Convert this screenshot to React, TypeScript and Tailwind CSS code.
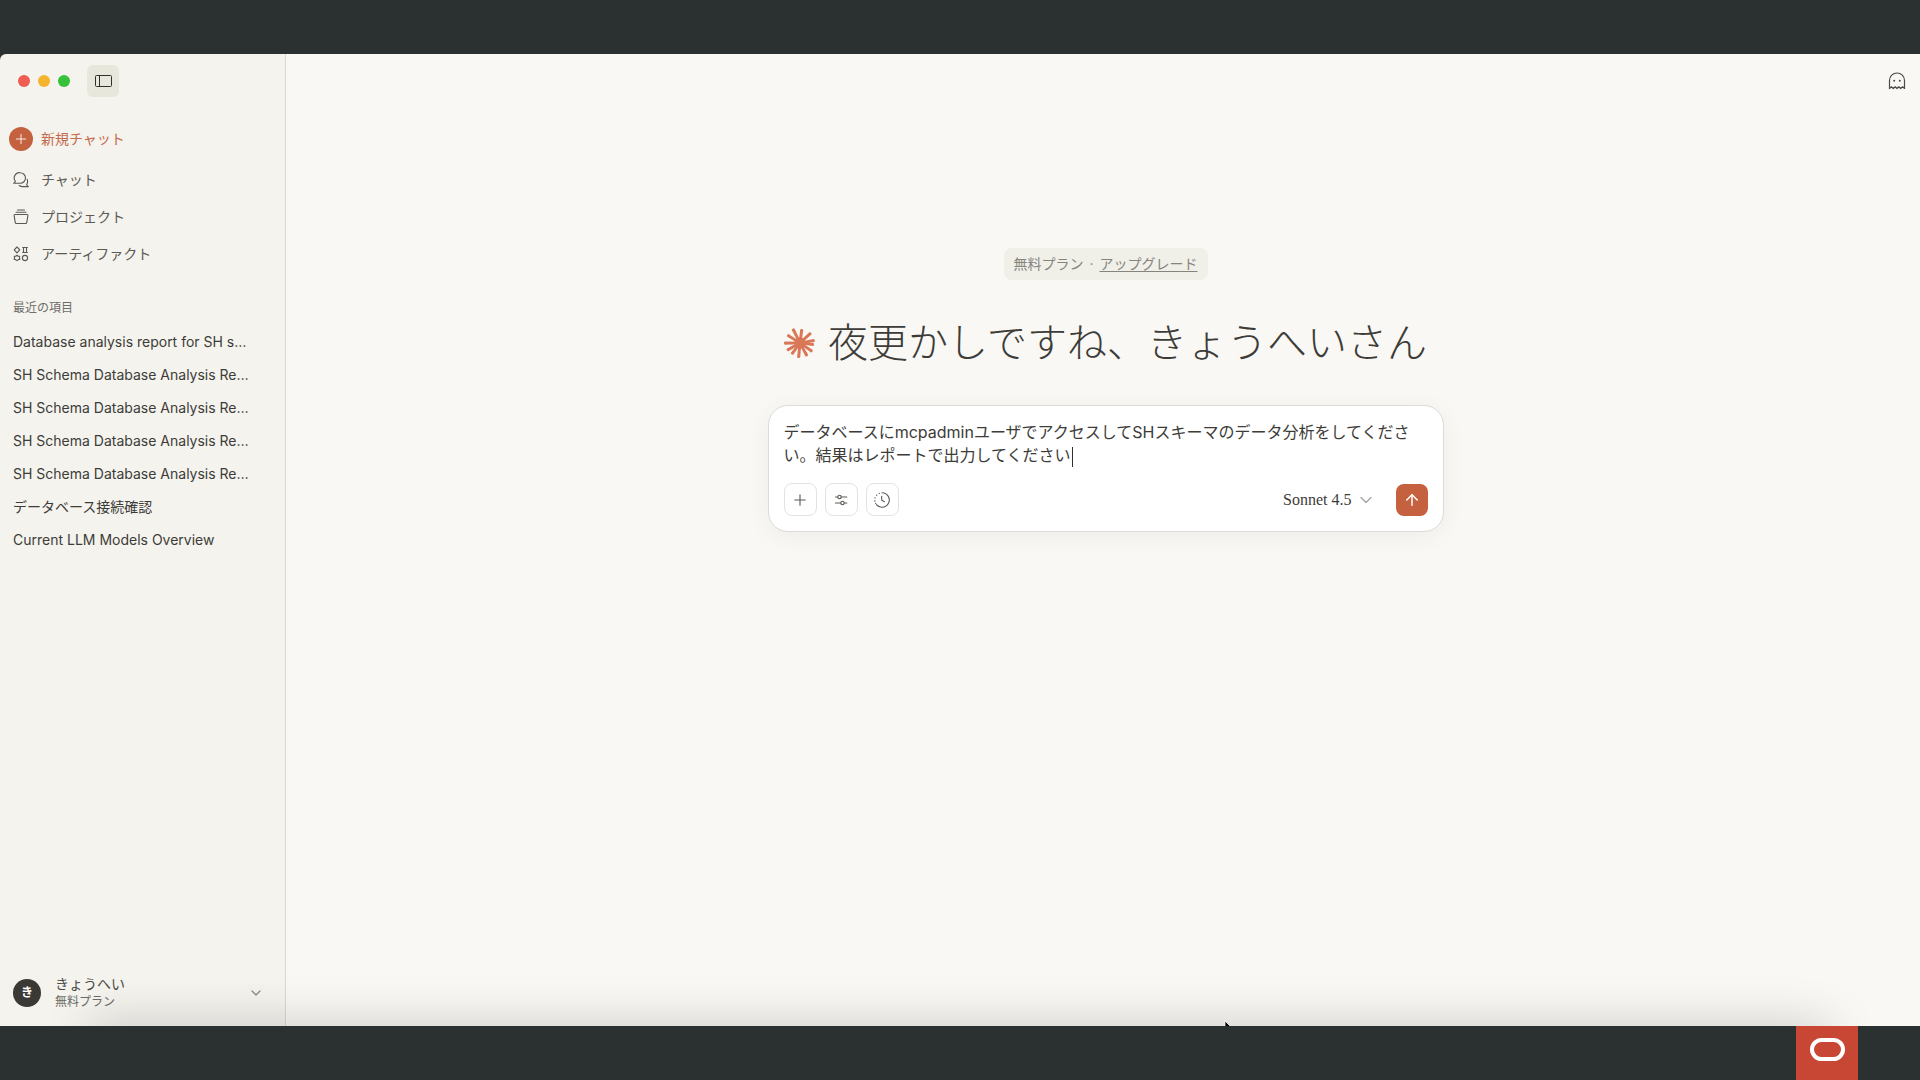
import { useState } from 'react';
import type { ReactNode } from 'react';
import { ArrowUp, ChevronDown, Plus } from 'lucide-react';

const RECENTS = [
  'Database analysis report for SH s…',
  'SH Schema Database Analysis Re…',
  'SH Schema Database Analysis Re…',
  'SH Schema Database Analysis Re…',
  'SH Schema Database Analysis Re…',
  'データベース接続確認',
  'Current LLM Models Overview',
];

// [angle in degrees, length]
const RAYS = [
  [7, 15], [35, 16], [62, 16], [96, 16], [127, 15], [151, 16],
  [180, 17], [213, 16], [244, 17], [278, 15], [318, 16], [350, 16],
];

function Starburst() {
  return (
    <svg className="size-8 shrink-0" viewBox="-17 -17 34 34" fill="#d97757" aria-hidden="true">
      <circle r="6" />
      {RAYS.map(([angle, len]) => (
        <path
          key={angle}
          transform={`rotate(${angle})`}
          d={`M0 -1.4 L${len - 1} -1.8 Q${len} -1.6 ${len} 0 Q${len} 1.5 ${len - 1} 1.5 L0 1.4 Z`}
        />
      ))}
    </svg>
  );
}

function ChatsIcon() {
  return (
    <svg className="size-4" viewBox="0 0 16 16" fill="none" stroke="currentColor" strokeWidth="1.1" strokeLinejoin="round" strokeLinecap="round" aria-hidden="true">
      <path d="M7.200.7a5.300 5.300 0 1 1 0 10.600H.7c.9-.7 1.500-1.300 1.700-2A5.300 5.300 0 0 1 7.200.7Z" />
      <path d="M14.200 7.300c.6 1.800.4 3.700-.6 5.300.3.7.9 1.300 1.700 2H9.800c-1.500 0-2.700-.4-3.600-1.100" />
    </svg>
  );
}

function ProjectsIcon() {
  return (
    <svg className="size-4" viewBox="0 0 16 16" fill="none" stroke="currentColor" strokeWidth="1.1" strokeLinejoin="round" strokeLinecap="round" aria-hidden="true">
      <path d="M4.500 1h7M3 3.200h10" />
      <path d="M1.800 5.500h12.400c.5 0 .8.4.7.9l-1.100 7c-.1.700-.6 1.100-1.300 1.100h-9c-.7 0-1.200-.4-1.300-1.100l-1.100-7c-.1-.5.2-.9.7-.9Z" />
    </svg>
  );
}

function ArtifactsIcon() {
  return (
    <svg className="size-4" viewBox="0 0 16 16" fill="none" stroke="currentColor" strokeWidth="1.1" strokeLinejoin="round" aria-hidden="true">
      <path d="M4 1 6.800 3.900 4 6.800 1.200 3.900Z" />
      <path d="M9.200 1.500h5.600M9.200 6.500h5.600M10.500 1.500v5M13.500 1.500v5" />
      <path d="M4 9.300 5.200 10.200 6.700 10.200 6.400 11.800 6.900 13.200 5.300 13.600 4 14.600 2.700 13.600 1.100 13.200 1.600 11.800 1.300 10.200 2.800 10.200Z" />
      <circle cx="12" cy="12" r="2.600" />
    </svg>
  );
}

function SidebarIcon() {
  return (
    <svg className="h-3 w-[17px]" viewBox="0 0 17 12" fill="none" stroke="currentColor" aria-hidden="true">
      <rect x=".5" y=".5" width="16" height="11" rx="1" />
      <path d="M4.500 .5v11" />
    </svg>
  );
}

function GhostIcon() {
  return (
    <svg className="size-[18px]" viewBox="0 0 18 18" fill="none" stroke="currentColor" strokeWidth="1.200" strokeLinejoin="round" aria-hidden="true">
      <path d="M1.500 16.500V8.500a7.500 7.500 0 0 1 15 0v8l-2-1.700-1.800 1.700-1.900-1.700L9 16.500l-1.800-1.700-1.900 1.700-1.800-1.700Z" />
      <circle cx="6.200" cy="8.800" r="1" fill="currentColor" stroke="none" />
      <circle cx="11.800" cy="8.800" r="1" fill="currentColor" stroke="none" />
    </svg>
  );
}

function SlidersIcon() {
  return (
    <svg className="size-4" viewBox="0 0 16 16" fill="none" stroke="currentColor" strokeWidth="1.100" strokeLinecap="round" aria-hidden="true">
      <path d="M2.500 5h2.200M8.300 5h5.500M2.500 11h5.200M11.300 11h2.500" />
      <circle cx="6.500" cy="5" r="1.700" />
      <circle cx="9.500" cy="11" r="1.700" />
    </svg>
  );
}

function ClockIcon() {
  return (
    <svg className="size-4" viewBox="0 0 16 16" fill="none" stroke="currentColor" strokeWidth="1.100" strokeLinecap="round" aria-hidden="true">
      <path d="M8 .7a7.300 7.300 0 1 1-5.600 12" />
      <path d="M5.200 1.300h.1M2.600 3.200h.1M1 5.900h.1M.8 9h.1M1.600 11.300h.1" strokeWidth="1.300" />
      <path d="M7.700 4.200v4l2.800 1.500" />
    </svg>
  );
}

function NavItem({ icon, label }: { icon: ReactNode; label: string }) {
  return (
    <a href="#" className="flex h-[37px] items-center gap-3 pl-[13px] text-sm text-[#5a5954]">
      {icon}
      <span>{label}</span>
    </a>
  );
}

function ToolButton({ label, children }: { label: string; children: ReactNode }) {
  return (
    <button
      type="button"
      aria-label={label}
      className="flex size-[33px] items-center justify-center rounded-lg border border-[#e4e3df] text-[#5a5954]"
    >
      {children}
    </button>
  );
}

function Sidebar() {
  return (
    <aside className="flex w-[286px] shrink-0 flex-col border-r border-[#d9d8d2] bg-[#f4f3ee]">
      <div className="flex items-center gap-2 pt-[11px] pl-[18px]">
        <span className="size-3 rounded-full bg-[#ee5c54]" />
        <span className="size-3 rounded-full bg-[#f6b42e]" />
        <span className="size-3 rounded-full bg-[#36c13b]" />
        <button
          type="button"
          aria-label="サイドバー"
          className="ml-[9px] flex size-8 items-center justify-center rounded-md bg-[#e8e7dc] text-[#30302c]"
        >
          <SidebarIcon />
        </button>
      </div>

      <nav className="mt-5">
        <a href="#" className="flex h-11 items-center gap-2 pl-[9px] text-sm text-[#c4694a]">
          <span className="flex size-6 items-center justify-center rounded-full bg-[#c4623f] text-[#fbe9e2]">
            <Plus className="size-4" strokeWidth={1.5} />
          </span>
          <span>新規チャット</span>
        </a>
        <NavItem icon={<ChatsIcon />} label="チャット" />
        <NavItem icon={<ProjectsIcon />} label="プロジェクト" />
        <NavItem icon={<ArtifactsIcon />} label="アーティファクト" />
      </nav>

      <h2 className="mt-6 pl-[13px] text-xs leading-6 text-[#6f6e69]">最近の項目</h2>
      <ul className="mt-[5px] pl-[13px]">
        {RECENTS.map((title, i) => (
          <li key={i}>
            <a href="#" className="block text-sm leading-[33px] whitespace-nowrap text-[#3d3c38]">
              {title}
            </a>
          </li>
        ))}
      </ul>

      {/* Account */}
      <button type="button" className="mt-auto flex items-center pr-[21px] pb-4 pl-[13px] text-left">
        <span className="flex size-7 items-center justify-center rounded-full bg-[#3a3935] text-xs font-bold text-white">
          き
        </span>
        <span className="ml-[14px] flex-1">
          <span className="block text-sm leading-[18px] text-[#4b4a46]">きょうへい</span>
          <span className="block text-xs leading-[17px] text-[#6b6a66]">無料プラン</span>
        </span>
        <ChevronDown className="size-4 text-[#8a8984]" strokeWidth={2} />
      </button>
    </aside>
  );
}

function Composer() {
  const [text, setText] = useState(
    'データベースにmcpadminユーザでアクセスしてSHスキーマのデータ分析をしてください。結果はレポートで出力してください',
  );

  return (
    <form
      className="w-full rounded-[20px] border border-[#dcdbd5] bg-white p-[15px] shadow-[0_4px_24px_rgba(0,0,0,0.05)]"
      onSubmit={(e) => e.preventDefault()}
    >
      <div className="relative">
        <textarea
          aria-label="メッセージ"
          rows={2}
          value={text}
          onChange={(e) => setText(e.target.value)}
          className="block w-full resize-none overflow-hidden text-base leading-[23px] text-[#3d3c38] outline-none"
        />
        <span className="absolute bottom-0 left-[288px] h-5 w-px bg-[#30302c]" />
      </div>
      <div className="mt-4 flex items-center gap-2">
        <ToolButton label="追加">
          <Plus className="size-[18px]" strokeWidth={1.5} />
        </ToolButton>
        <ToolButton label="ツール">
          <SlidersIcon />
        </ToolButton>
        <ToolButton label="履歴">
          <ClockIcon />
        </ToolButton>
        <button
          type="button"
          className="mr-3 ml-auto flex items-center gap-1 font-['Liberation_Serif',serif] text-base text-[#3d3c38]"
        >
          Sonnet 4.5
          <ChevronDown className="size-5 text-[#a3a29d]" strokeWidth={1.5} />
        </button>
        <button
          type="submit"
          aria-label="送信"
          className="flex size-8 items-center justify-center rounded-lg bg-[#c6613f] text-white"
        >
          <ArrowUp className="size-[18px]" strokeWidth={2} />
        </button>
      </div>
    </form>
  );
}

export default function App() {
  return (
    <div className="flex h-screen flex-col bg-[#2b3130] font-['Inter','Noto_Sans_CJK_JP',sans-serif]">
      <div className="relative my-[54px] flex flex-1 overflow-hidden rounded-tl-md">
        <Sidebar />

        <main className="flex flex-1 flex-col bg-[#f9f8f4]">
          <header className="flex justify-end pt-[18px] pr-[14px] text-[#4b4a46]">
            <button type="button" aria-label="シークレットチャット">
              <GhostIcon />
            </button>
          </header>

          <div className="flex flex-col items-center pt-[158px] pl-[5px]">
            <p className="flex h-8 items-center gap-1 rounded-lg bg-[#f0efe8] px-[10px] text-sm text-[#85847e]">
              無料プラン
              <span className="w-2 text-center">·</span>
              <a href="#" className="underline underline-offset-2">アップグレード</a>
            </p>
            <h1 className="mt-[33px] flex items-center gap-3 text-[40px] leading-[60px] font-light text-[#3d3c38]">
              <Starburst />
              夜更かしですね、きょうへいさん
            </h1>
            <div className="mt-8 w-full max-w-[676px]">
              <Composer />
            </div>
          </div>
        </main>

        {/* Soft shade rising from the dock edge */}
        <div className="pointer-events-none absolute top-full right-[90px] left-[90px] h-10 shadow-[0_0_50px_rgba(0,0,0,0.2)]" />
        {/* Mouse pointer, cut off by the window edge */}
        <svg className="absolute right-[684px] -bottom-3 h-[18px] w-3" viewBox="0 0 12 18" aria-hidden="true">
          <path d="M1 1v14l3.500-3.300L6.800 17l2.200-1-2.300-5H11Z" fill="#000" stroke="#fff" strokeWidth=".7" />
        </svg>
      </div>

      {/* Corner logo */}
      <div className="absolute right-[62px] bottom-0 flex h-[54px] w-[62px] justify-center bg-[#c74634] pt-3">
        <svg className="h-[23px] w-[35px]" viewBox="0 0 35 23" fill="none" aria-hidden="true">
          <rect x="2" y="2" width="31" height="19" rx="9.500" stroke="#fff" strokeWidth="4" />
        </svg>
      </div>
    </div>
  );
}
